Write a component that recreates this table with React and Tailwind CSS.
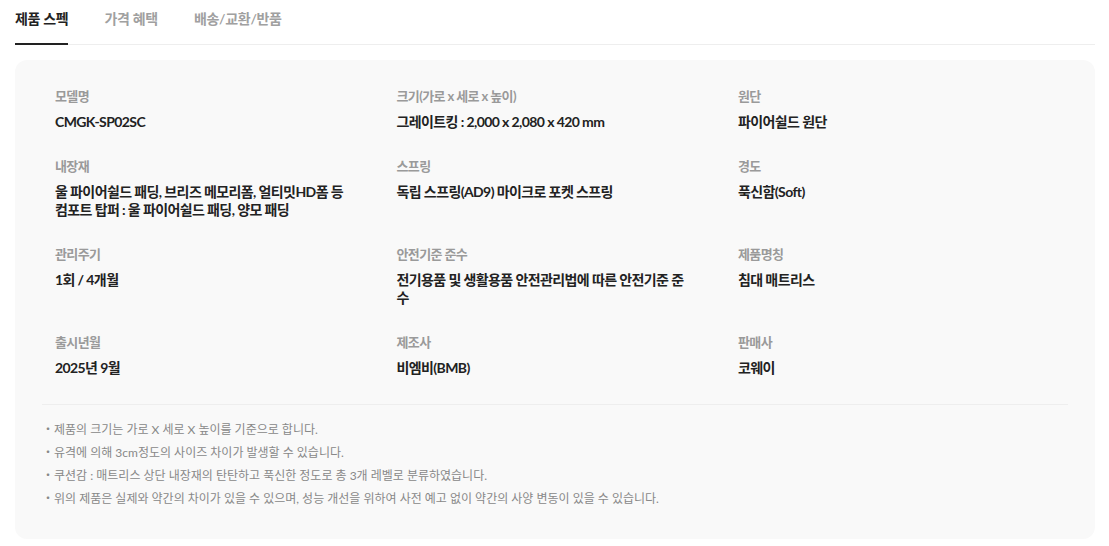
import React, { useState } from 'react';

const tabs = ['제품 스펙', '가격 혜택', '배송/교환/반품'];

const specs = [
  { label: '모델명', value: ['CMGK-SP02SC'] },
  { label: '크기(가로 x 세로 x 높이)', value: ['그레이트킹 : 2,000 x 2,080 x 420 mm'] },
  { label: '원단', value: ['파이어쉴드 원단'] },
  { label: '내장재', value: ['울 파이어쉴드 패딩, 브리즈 메모리폼, 얼티밋HD폼 등', '컴포트 탑퍼 : 울 파이어쉴드 패딩, 양모 패딩'] },
  { label: '스프링', value: ['독립 스프링(AD9) 마이크로 포켓 스프링'] },
  { label: '경도', value: ['푹신함(Soft)'] },
  { label: '관리주기', value: ['1회 / 4개월'] },
  { label: '안전기준 준수', value: ['전기용품 및 생활용품 안전관리법에 따른 안전기준 준수'] },
  { label: '제품명칭', value: ['침대 매트리스'] },
  { label: '출시년월', value: ['2025년 9월'] },
  { label: '제조사', value: ['비엠비(BMB)'] },
  { label: '판매사', value: ['코웨이'] },
];

const notes = [
  '제품의 크기는 가로 X 세로 X 높이를 기준으로 합니다.',
  '유격에 의해 3cm정도의 사이즈 차이가 발생할 수 있습니다.',
  '쿠션감 : 매트리스 상단 내장재의 탄탄하고 푹신한 정도로 총 3개 레벨로 분류하였습니다.',
  '위의 제품은 실제와 약간의 차이가 있을 수 있으며, 성능 개선을 위하여 사전 예고 없이 약간의 사양 변동이 있을 수 있습니다.',
];

export default function App() {
  const [active, setActive] = useState(0);

  return (
    <div className="min-h-screen bg-white px-[15px] font-['Lato','Noto_Sans_CJK_KR',sans-serif]">
      {/* Tabs */}
      <div className="flex w-[1080px] gap-9 border-b border-[#eeeeee]">
        {tabs.map((tab, i) => (
          <button
            key={tab}
            onClick={() => setActive(i)}
            className={
              i === active
                ? '-mb-px border-b-2 border-[#222222] pt-[9px] pb-[14px] text-[14px] leading-5 font-bold tracking-[-0.3px] text-[#222222]'
                : '-mb-px border-b-2 border-transparent pt-[9px] pb-[14px] text-[14px] leading-5 font-semibold tracking-[-0.3px] text-[#a0a0a0]'
            }
          >
            {tab}
          </button>
        ))}
      </div>

      {/* Spec card */}
      <div className="mt-[15px] w-[1080px] rounded-xl bg-[#f9f9f9] pt-[27px] pb-[29px]">
        <div className="grid grid-cols-[298px_298px_298px] gap-x-[43.5px] gap-y-[26px] pl-10">
          {specs.map((s) => (
            <div key={s.label} className="flex flex-col gap-2">
              <div className="text-[13px] leading-[18px] font-bold tracking-[-0.6px] text-[#9a9a9a]">{s.label}</div>
              <div className="text-[14px] leading-[18px] font-bold tracking-[-0.6px] text-[#222222]">
                {s.value.map((v) => (
                  <div key={v} className={s.value.length > 1 ? 'whitespace-nowrap' : ''}>{v}</div>
                ))}
              </div>
            </div>
          ))}
        </div>

        <div className="mx-[27px] mt-[27px] border-t border-[#eeeeee]" />

        <ul className="mx-[27px] mt-[13px] text-[12px] leading-[23px] text-[#888888]">
          {notes.map((n) => (
            <li key={n}>・{n}</li>
          ))}
        </ul>
      </div>
    </div>
  );
}
